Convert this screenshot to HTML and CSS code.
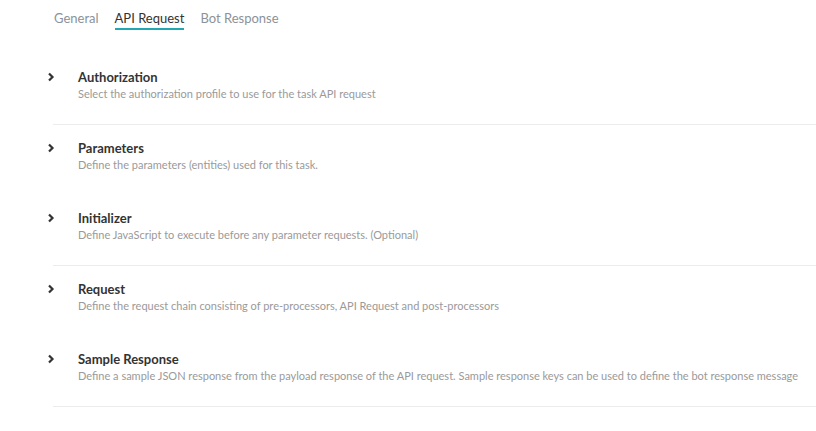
FILE: index.html
```html
<!DOCTYPE html>
<html>
<head>
<meta charset="utf-8">
<link rel="stylesheet" href="styles.css">
</head>
<body>
<nav class="tabs">
  <span class="tab">General</span>
  <span class="tab active">API Request</span>
  <span class="tab">Bot Response</span>
</nav>
<ul class="sections">
  <li class="section sep">
    <svg class="chev" width="8" height="10" viewBox="0 0 8 10"><polyline points="2,1.5 5.5,5 2,8.5" fill="none" stroke="#333" stroke-width="2.2"/></svg>
    <div class="text"><div class="title">Authorization</div><div class="desc">Select the authorization profile to use for the task API request</div></div>
  </li>
  <li class="section">
    <svg class="chev" width="8" height="10" viewBox="0 0 8 10"><polyline points="2,1.5 5.5,5 2,8.5" fill="none" stroke="#333" stroke-width="2.2"/></svg>
    <div class="text"><div class="title">Parameters</div><div class="desc">Define the parameters (entities) used for this task.</div></div>
  </li>
  <li class="section sep">
    <svg class="chev" width="8" height="10" viewBox="0 0 8 10"><polyline points="2,1.5 5.5,5 2,8.5" fill="none" stroke="#333" stroke-width="2.2"/></svg>
    <div class="text"><div class="title">Initializer</div><div class="desc">Define JavaScript to execute before any parameter requests. (Optional)</div></div>
  </li>
  <li class="section">
    <svg class="chev" width="8" height="10" viewBox="0 0 8 10"><polyline points="2,1.5 5.5,5 2,8.5" fill="none" stroke="#333" stroke-width="2.2"/></svg>
    <div class="text"><div class="title">Request</div><div class="desc">Define the request chain consisting of pre-processors, API Request and post-processors</div></div>
  </li>
  <li class="section sep">
    <svg class="chev" width="8" height="10" viewBox="0 0 8 10"><polyline points="2,1.5 5.5,5 2,8.5" fill="none" stroke="#333" stroke-width="2.2"/></svg>
    <div class="text"><div class="title">Sample Response</div><div class="desc">Define a sample JSON response from the payload response of the API request. Sample response keys can be used to define the bot response message</div></div>
  </li>
</ul>
</body>
</html>
```
FILE: styles.css
```css
html, body {
  margin: 0;
  padding: 0;
  background: #fff;
  font-family: Lato, "Liberation Sans", sans-serif;
}
.tabs {
  display: flex;
  gap: 16px;
  padding: 10px 0 0 54px;
  height: 31px;
  box-sizing: border-box;
}
.tab {
  font-size: 13px;
  color: #8c9298;
  line-height: 16px;
  height: 20px;
  box-sizing: border-box;
}
.tab.active {
  color: #333;
  border-bottom: 2px solid #21a8b3;
}
.sections {
  list-style: none;
  margin: 23px 0 0 53px;
  padding: 0;
}
.section {
  display: flex;
  align-items: flex-start;
  height: 70.5px;
  box-sizing: border-box;
  padding-top: 15px;
  border-bottom: 1px solid transparent;
}
.section.sep {
  border-bottom-color: #ececec;
}
.chev {
  flex: none;
  margin: 3px 0 0 -6px;
  width: 8px;
  height: 10px;
}
.text {
  margin-left: 23px;
}
.title {
  font-size: 13px;
  font-weight: 700;
  color: #333;
  line-height: 16px;
}
.desc {
  font-size: 11px;
  color: #9a9a9a;
  line-height: 14px;
  margin-top: 2px;
}
```
